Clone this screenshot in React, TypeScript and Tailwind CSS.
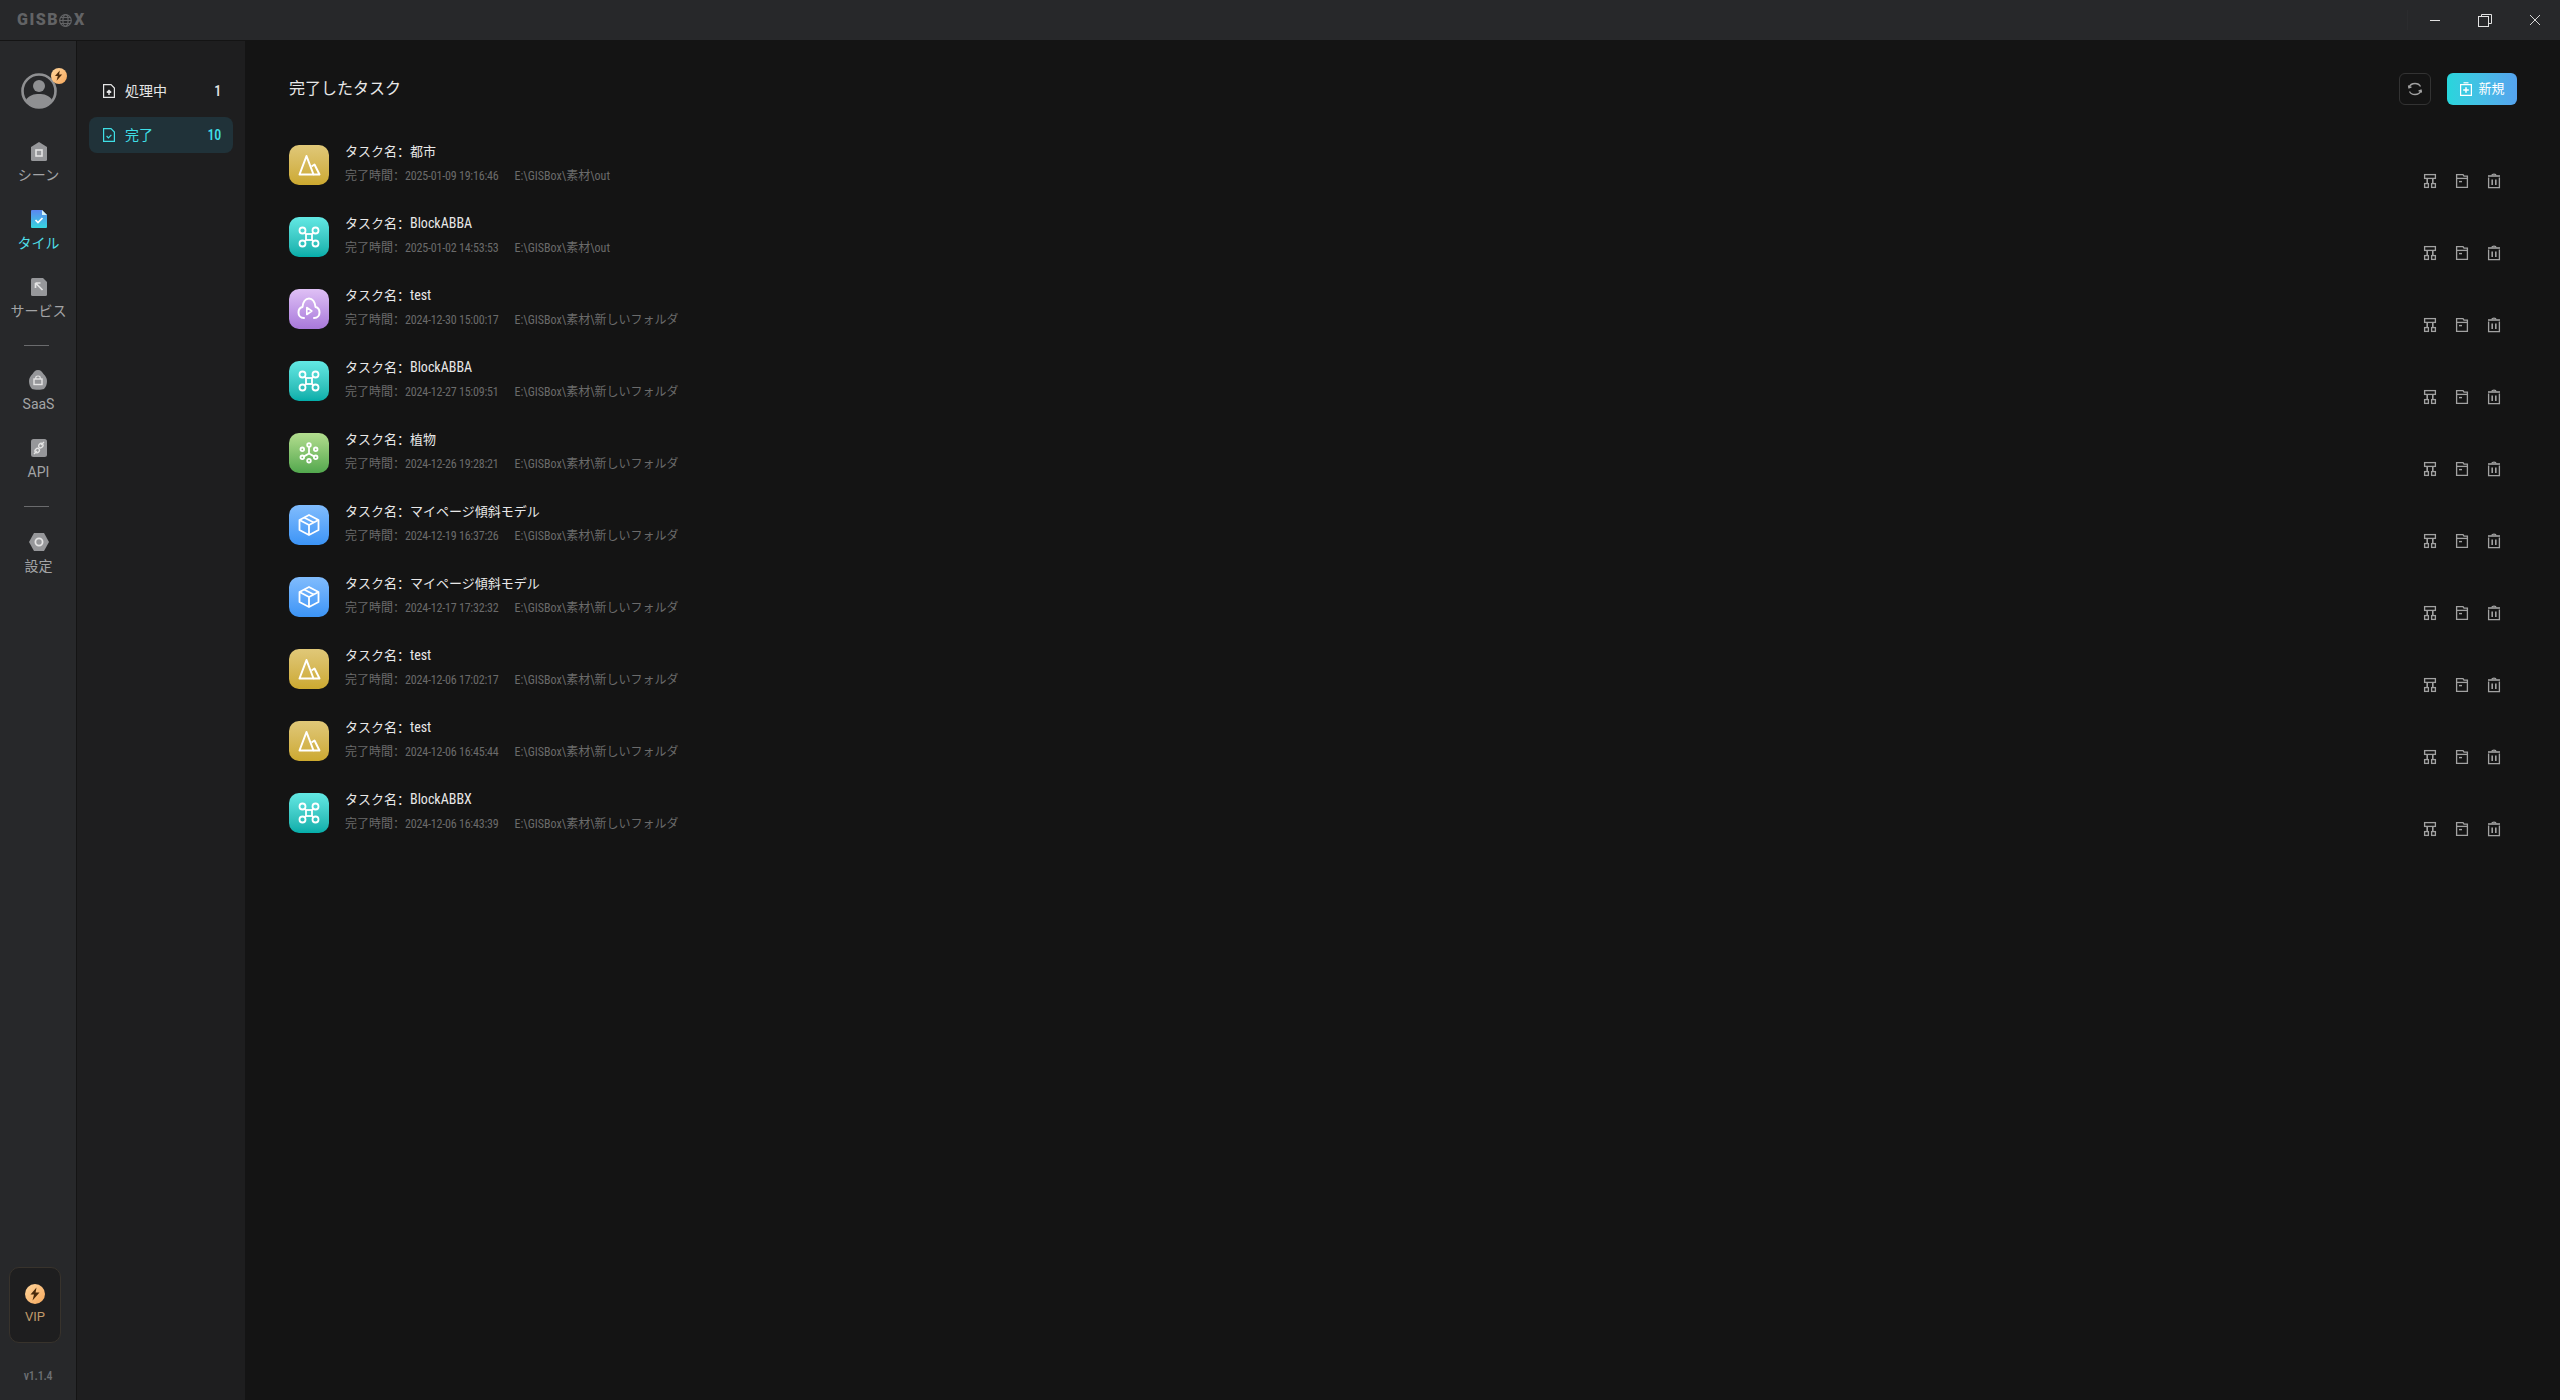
import React from "react";

const font = "font-['Roboto','Noto_Sans_CJK_SC',sans-serif]";
const narrow = "[font-stretch:75%] tracking-[-0.2px]";
const semiNarrow = "[font-stretch:87%]";

function Mountain() {
  return (
    <svg width="40" height="40" viewBox="0 0 40 40" fill="none" stroke="#fff" strokeWidth="2" strokeLinejoin="round">
      <path d="M10.5 29.5 L17.5 11 L24.5 29.5 Z" />
      <path d="M22.5 21.5 L25.5 19.5 L30.5 29.5 H24.5" />
    </svg>
  );
}

function Drone() {
  return (
    <svg width="40" height="40" viewBox="0 0 40 40" fill="none" stroke="#fff" strokeWidth="1.8">
      <rect x="17" y="17" width="6" height="6" />
      <circle cx="13.5" cy="13.5" r="3" />
      <circle cx="26.5" cy="13.5" r="3" />
      <circle cx="13.5" cy="26.5" r="3" />
      <circle cx="26.5" cy="26.5" r="3" />
      <path d="M15.6 15.6 L17 17 M24.4 15.6 L23 17 M15.6 24.4 L17 23 M24.4 24.4 L23 23" />
    </svg>
  );
}

function CloudPlay() {
  return (
    <svg width="40" height="40" viewBox="0 0 40 40" fill="none" stroke="#fff" strokeWidth="2" strokeLinecap="round" strokeLinejoin="round">
      <path d="M15 29 C11 29 9.5 26 9.5 23.5 C9.5 20.5 11.5 18.5 13.5 18 C14 13 16.5 9.5 20 9.5 C23.5 9.5 26 13 26.5 18 C28.5 18.5 30.5 20.5 30.5 23.5 C30.5 26 29 29 25 29" />
      <path d="M17.8 18.5 L22.8 22 L17.8 25.5 Z" strokeWidth="1.6" />
    </svg>
  );
}

function Cluster() {
  return (
    <svg width="40" height="40" viewBox="0 0 40 40" fill="none" stroke="#fff" strokeWidth="1.8">
      <circle cx="20" cy="12" r="1.8" />
      <circle cx="13.3" cy="16.3" r="1.8" />
      <circle cx="26.7" cy="16.3" r="1.8" />
      <circle cx="13.3" cy="24.3" r="1.8" />
      <circle cx="26.7" cy="24.3" r="1.8" />
      <circle cx="20" cy="27.7" r="1.8" />
      <path d="M20 13.8 V20.5 L15 23.4 M20 20.5 L25 23.4" />
    </svg>
  );
}

function Box() {
  return (
    <svg width="40" height="40" viewBox="0 0 40 40" fill="none" stroke="#fff" strokeWidth="1.8" strokeLinejoin="round">
      <path d="M20 10 L29.5 15 V25 L20 30 L10.5 25 V15 Z" />
      <path d="M10.5 15 L20 20 L29.5 15 M20 20 V30" />
      <path d="M15 12.5 L24.8 17.5" />
    </svg>
  );
}

const tileStyles = {
  mountain: { bg: "bg-gradient-to-b from-[#e0c878] to-[#cca92e]", icon: <Mountain /> },
  drone: { bg: "bg-gradient-to-b from-[#62e9e4] to-[#02aeaa]", icon: <Drone /> },
  cloud: { bg: "bg-gradient-to-b from-[#dfc0f5] to-[#a878da]", icon: <CloudPlay /> },
  cluster: { bg: "bg-gradient-to-b from-[#b3de8f] to-[#52a84e]", icon: <Cluster /> },
  box: { bg: "bg-gradient-to-b from-[#80bcfd] to-[#3b94f6]", icon: <Box /> },
};

const tasks: { kind: keyof typeof tileStyles; name: string; time: string; path: string }[] = [
  { kind: "mountain", name: "都市", time: "2025-01-09 19:16:46", path: "E:\\GISBox\\素材\\out" },
  { kind: "drone", name: "BlockABBA", time: "2025-01-02 14:53:53", path: "E:\\GISBox\\素材\\out" },
  { kind: "cloud", name: "test", time: "2024-12-30 15:00:17", path: "E:\\GISBox\\素材\\新しいフォルダ" },
  { kind: "drone", name: "BlockABBA", time: "2024-12-27 15:09:51", path: "E:\\GISBox\\素材\\新しいフォルダ" },
  { kind: "cluster", name: "植物", time: "2024-12-26 19:28:21", path: "E:\\GISBox\\素材\\新しいフォルダ" },
  { kind: "box", name: "マイページ傾斜モデル", time: "2024-12-19 16:37:26", path: "E:\\GISBox\\素材\\新しいフォルダ" },
  { kind: "box", name: "マイページ傾斜モデル", time: "2024-12-17 17:32:32", path: "E:\\GISBox\\素材\\新しいフォルダ" },
  { kind: "mountain", name: "test", time: "2024-12-06 17:02:17", path: "E:\\GISBox\\素材\\新しいフォルダ" },
  { kind: "mountain", name: "test", time: "2024-12-06 16:45:44", path: "E:\\GISBox\\素材\\新しいフォルダ" },
  { kind: "drone", name: "BlockABBX", time: "2024-12-06 16:43:39", path: "E:\\GISBox\\素材\\新しいフォルダ" },
];

function Bolt({ size }: { size: number }) {
  return (
    <span
      className="flex items-center justify-center rounded-full bg-gradient-to-br from-[#ffd59b] to-[#f5a85c]"
      style={{ width: size, height: size }}
    >
      <svg width={size * 0.7} height={size * 0.7} viewBox="0 0 14 14" fill="#4a2a0c">
        <path d="M8.5 0.5 L2.5 7.5 H6 L4.5 13.5 L11.5 5.5 H7.6 Z" />
      </svg>
    </span>
  );
}

function NavItem({ label, icon, active, top }: { label: string; icon: React.ReactNode; active?: boolean; top: string }) {
  return (
    <div className={`flex flex-col items-center ${top}`}>
      <div className="flex h-5 items-center justify-center">{icon}</div>
      <span className={`mt-[5px] whitespace-nowrap text-[14px] leading-[18px] ${active ? "text-[#4fdde6]" : "text-[#a3a4a6]"}`}>
        {label}
      </span>
    </div>
  );
}

function Sidebar() {
  return (
    <aside className="flex w-[77px] shrink-0 flex-col items-center border-r border-[#141414] bg-[#27282a]">
      <div className="relative mt-[32px] ml-[1px]">
        <svg width="36" height="36" viewBox="0 0 36 36">
          <circle cx="18" cy="18" r="16.5" fill="none" stroke="#8f9092" strokeWidth="2.6" />
          <circle cx="18" cy="13" r="6" fill="#8f9092" />
          <path d="M5 27 C8 22 13 21 18 21 C23 21 28 22 31 27 C28 32 23 35 18 35 C13 35 8 32 5 27 Z" fill="#8f9092" />
        </svg>
        <div className="absolute -right-[10px] -top-[5px]">
          <Bolt size={16} />
        </div>
      </div>

      <NavItem
        top="mt-[32px] ml-[1px]"
        label="シーン"
        icon={
          <svg width="16" height="19" viewBox="0 0 16 19">
            <path d="M8 0 L16 5 V17.5 Q16 19 14.5 19 H1.5 Q0 19 0 17.5 V5 Z" fill="#96979a" />
            <rect x="5" y="8" width="6" height="6" fill="none" stroke="#e4e4e4" strokeWidth="1.6" />
          </svg>
        }
      />
      <NavItem
        top="mt-[25px] ml-[1px]"
        active
        label="タイル"
        icon={
          <svg width="16" height="18" viewBox="0 0 16 18">
            <defs>
              <linearGradient id="tile-doc" x1="0" y1="0" x2="0" y2="1">
                <stop offset="0" stopColor="#5b86f0" />
                <stop offset="1" stopColor="#36d6e0" />
              </linearGradient>
            </defs>
            <path d="M0 1 Q0 0 1 0 H11 L16 5 V17 Q16 18 15 18 H1 Q0 18 0 17 Z" fill="url(#tile-doc)" />
            <path d="M11 0 L16 5 H11 Z" fill="#d4f2f6" />
            <path d="M4.5 10 L7 12.5 L11.5 8" fill="none" stroke="#fff" strokeWidth="1.7" />
          </svg>
        }
      />
      <NavItem
        top="mt-[25px] ml-[1px]"
        label="サービス"
        icon={
          <svg width="16" height="18" viewBox="0 0 16 18">
            <path d="M0 1.5 Q0 0 1.5 0 H12 L16 4 V16.5 Q16 18 14.5 18 H1.5 Q0 18 0 16.5 Z" fill="#96979a" />
            <path d="M4.5 5 V10 M4.5 5 H9.5 M4.5 5 L11.5 12" fill="none" stroke="#e4e4e4" strokeWidth="1.7" />
          </svg>
        }
      />

      <div className="mt-[25px] mr-[4px] h-px w-[25px] bg-[#6a6b6d]" />

      <NavItem
        top="mt-[24px] ml-[1px]"
        label="SaaS"
        icon={
          <svg width="18" height="20" viewBox="0 0 18 20">
            <path d="M9 0 C12 0 13 2 14.5 4 C16.5 6 18 8 18 11 C18 14 17 17 15 19 C13 20 5 20 3 19 C1 17 0 14 0 11 C0 8 1.5 6 3.5 4 C5 2 6 0 9 0 Z" fill="#96979a" />
            <rect x="5" y="9" width="8" height="5.5" fill="none" stroke="#e4e4e4" strokeWidth="1.4" />
            <path d="M6.8 9 V7.6 Q6.8 6 9 6 Q11.2 6 11.2 7.6 V9" fill="none" stroke="#e4e4e4" strokeWidth="1.2" />
          </svg>
        }
      />
      <NavItem
        top="mt-[25px] ml-[1px]"
        label="API"
        icon={
          <svg width="16" height="18" viewBox="0 0 16 18">
            <rect width="16" height="18" rx="2.5" fill="#96979a" />
            <path d="M3 15 L6 12 M13 3 L10 6" stroke="#e4e4e4" strokeWidth="1.4" />
            <ellipse cx="6.2" cy="11.6" rx="2.4" ry="2" transform="rotate(-45 6.2 11.6)" fill="none" stroke="#e4e4e4" strokeWidth="1.3" />
            <ellipse cx="9.8" cy="6.6" rx="2.4" ry="2" transform="rotate(-45 9.8 6.6)" fill="none" stroke="#e4e4e4" strokeWidth="1.3" />
          </svg>
        }
      />

      <div className="mt-[25px] mr-[4px] h-px w-[25px] bg-[#6a6b6d]" />

      <NavItem
        top="mt-[25px] ml-[1px]"
        label="設定"
        icon={
          <svg width="20" height="18" viewBox="0 0 20 18">
            <path d="M5 0 H15 L20 9 L15 18 H5 L0 9 Z" fill="#96979a" />
            <circle cx="10" cy="9" r="3.6" fill="none" stroke="#e4e4e4" strokeWidth="1.8" />
          </svg>
        }
      />

      <div className="mr-[6px] mt-auto flex h-[76px] w-[52px] flex-col items-center rounded-[10px] border border-[#38332c] bg-[#1e1e1f] pt-[16px]">
        <Bolt size={20} />
        <span className="mt-[4px] text-[13px] leading-[18px] text-[#c09a6a]">VIP</span>
      </div>
      <span className={`mb-[17px] mt-[26px] text-[12px] font-medium leading-[14px] text-[#6d7074] ${narrow}`}>v1.1.4</span>
    </aside>
  );
}

function SubMenu() {
  return (
    <aside className="flex w-[168px] shrink-0 flex-col gap-[8px] bg-[#1e1e1f] px-[12px] pt-[32px]">
      <div className="flex h-[36px] items-center rounded-[8px] pl-[14px] pr-[12px] text-[#e6e6e6]">
        <svg width="12" height="14" viewBox="0 0 12 14" fill="none" stroke="#e6e6e6" strokeWidth="1.2">
          <path d="M0.6 0.6 H8 L11.4 4 V13.4 H0.6 Z" />
          <path d="M6 11 V7 M3.8 8.6 L6 6.4 L8.2 8.6" strokeWidth="1.4" />
        </svg>
        <span className="ml-[10px] flex-1 text-[14px]">処理中</span>
        <span className={`text-[14px] font-medium ${narrow}`}>1</span>
      </div>
      <div className="flex h-[36px] items-center rounded-[8px] bg-[#203239] pl-[14px] pr-[12px] text-[#3fdfe6]">
        <svg width="12" height="14" viewBox="0 0 12 14" fill="none" stroke="#3fdfe6" strokeWidth="1.2">
          <path d="M0.6 0.6 H8 L11.4 4 V13.4 H0.6 Z" />
          <path d="M3.6 8 L5.4 9.8 L8.4 6.8" />
        </svg>
        <span className="ml-[10px] flex-1 text-[14px]">完了</span>
        <span className={`text-[14px] font-medium ${narrow}`}>10</span>
      </div>
    </aside>
  );
}

function RowActions() {
  return (
    <div className="mr-[15px] mt-[28px] flex gap-[16px]">
      <svg width="16" height="16" viewBox="0 0 16 16" fill="none" stroke="#a2a2a2" strokeWidth="1.3">
        <rect x="2.6" y="1.6" width="10.8" height="3.8" />
        <path d="M5.2 5.4 V10 M10.8 5.4 V10" strokeWidth="1.6" />
        <rect x="2.6" y="10.6" width="3.8" height="3.8" />
        <rect x="9.6" y="10.6" width="3.8" height="3.8" />
      </svg>
      <svg width="16" height="16" viewBox="0 0 16 16" fill="none" stroke="#a2a2a2" strokeWidth="1.3">
        <path d="M2.6 14.4 V1.6 H9 L10 3.2 H13.4 V14.4 Z" />
        <path d="M2.6 5.4 H13.4" />
        <path d="M5 8.6 H8" strokeWidth="1.4" />
      </svg>
      <svg width="16" height="16" viewBox="0 0 16 16" fill="none" stroke="#a2a2a2" strokeWidth="1.3">
        <path d="M2.6 4.6 V14.6 H13.4 V4.6" />
        <path d="M2 3 H14" strokeWidth="1.6" />
        <path d="M6 2.4 Q6 1.2 8 1.2 Q10 1.2 10 2.4" />
        <path d="M6.2 6.4 V12 M9.8 6.4 V12" strokeWidth="1.6" />
      </svg>
    </div>
  );
}

function TaskRow({ task }: { task: (typeof tasks)[number] }) {
  const tile = tileStyles[task.kind];
  // latin names sit a little larger than the kana around them
  const isLatin = /^[A-Za-z]+$/.test(task.name);
  return (
    <div className="flex h-[40px] justify-between">
      <div className="flex">
        <div className={`flex size-[40px] items-center justify-center rounded-[10px] ${tile.bg}`}>{tile.icon}</div>
        <div className="ml-[16px]">
          <div className="-mt-[1px] h-[16px] text-[13px] leading-[16px] text-[#e8e8e8]">
            タスク名：<span className={isLatin ? `text-[14px] leading-none ${semiNarrow}` : ""}>{task.name}</span>
          </div>
          <div className="mt-[8px] flex text-[12px] leading-[16px] text-[#6b6b6b]">
            <span>
              完了時間：<span className={narrow}>{task.time}</span>
            </span>
            <span className={`ml-[16px] ${semiNarrow}`}>{task.path}</span>
          </div>
        </div>
      </div>
      <RowActions />
    </div>
  );
}

export default function App() {
  return (
    <div className={`flex h-screen w-full flex-col overflow-hidden bg-[#141414] ${font}`}>
      <header className="flex h-[41px] shrink-0 items-center border-b border-[#141414] bg-[#27282a]">
        <div className="ml-[17px] flex items-center text-[16px] font-black leading-none tracking-[1.5px] text-[#626365]">
          <span>GISB</span>
          <svg className="mr-[2px]" width="13" height="13" viewBox="0 0 13 13" fill="none" stroke="#626365" strokeWidth="1.2">
            <circle cx="6.5" cy="6.5" r="5.8" />
            <ellipse cx="6.5" cy="6.5" rx="2.6" ry="5.8" />
            <path d="M0.7 6.5 H12.3 M1.6 3.5 H11.4 M1.6 9.5 H11.4" />
          </svg>
          <span>X</span>
        </div>
        <div className="ml-auto flex items-center">
          <div className="mr-[2px] h-[20px] w-px bg-[#2b2c2e]" />
          <div className="flex h-[40px] w-[50px] items-center justify-center">
            <div className="h-px w-[10px] bg-[#e2e2e2]" />
          </div>
          <div className="flex h-[40px] w-[50px] items-center justify-center">
            <svg width="14" height="13" viewBox="0 0 14 13" fill="none" stroke="#e2e2e2" strokeWidth="1">
              <rect x="0.5" y="2.5" width="10" height="10" />
              <path d="M3.5 2.5 V0.5 H13.5 V9.5 H10.5" />
            </svg>
          </div>
          <div className="flex h-[40px] w-[50px] items-center justify-center">
            <svg width="12" height="12" viewBox="0 0 12 12" stroke="#d6d6d6" strokeWidth="1">
              <path d="M1 1 L11 11 M11 1 L1 11" />
            </svg>
          </div>
        </div>
      </header>

      <div className="flex min-h-0 flex-1">
        <Sidebar />
        <SubMenu />
        <main className="flex-1 pl-[44px] pr-[43px] pt-[32px]">
          <div className="flex h-[32px] items-center justify-between">
            <h1 className="text-[16px] font-normal text-[#e8e8e8]">完了したタスク</h1>
            <div className="flex gap-[16px]">
              <button className="flex size-[32px] items-center justify-center rounded-[6px] border border-[#333]">
                <svg width="16" height="16" viewBox="0 0 16 16" fill="none" stroke="#a2a2a2" strokeWidth="1.3">
                  <path d="M2 6.5 C3 3.5 5.5 2.5 8 2.5 C10.5 2.5 12.5 3.5 13.5 5.5" />
                  <path d="M14 9.5 C13 12.5 10.5 13.5 8 13.5 C5.5 13.5 3.5 12.5 2.5 10.5" />
                  <path d="M1.5 4.5 L2 6.8 L4.5 6" fill="#a2a2a2" />
                  <path d="M14.5 11.5 L14 9.2 L11.5 10" fill="#a2a2a2" />
                </svg>
              </button>
              <button className="flex h-[32px] w-[70px] items-center justify-center gap-[5px] rounded-[6px] bg-gradient-to-r from-[#27d6dc] to-[#55a3ee] text-[13px] text-white">
                <svg width="14" height="14" viewBox="0 0 14 14" fill="none" stroke="#fff" strokeWidth="1.2">
                  <path d="M1.6 2.6 H12.4 V13.4 H1.6 Z" />
                  <path d="M4.5 0.8 H9.5" />
                  <path d="M7 5.2 V10.8 M4.2 8 H9.8" strokeWidth="1.5" />
                </svg>
                新規
              </button>
            </div>
          </div>
          <div className="mt-[40px] flex flex-col gap-[32px]">
            {tasks.map((task, i) => (
              <TaskRow key={i} task={task} />
            ))}
          </div>
        </main>
      </div>
    </div>
  );
}
